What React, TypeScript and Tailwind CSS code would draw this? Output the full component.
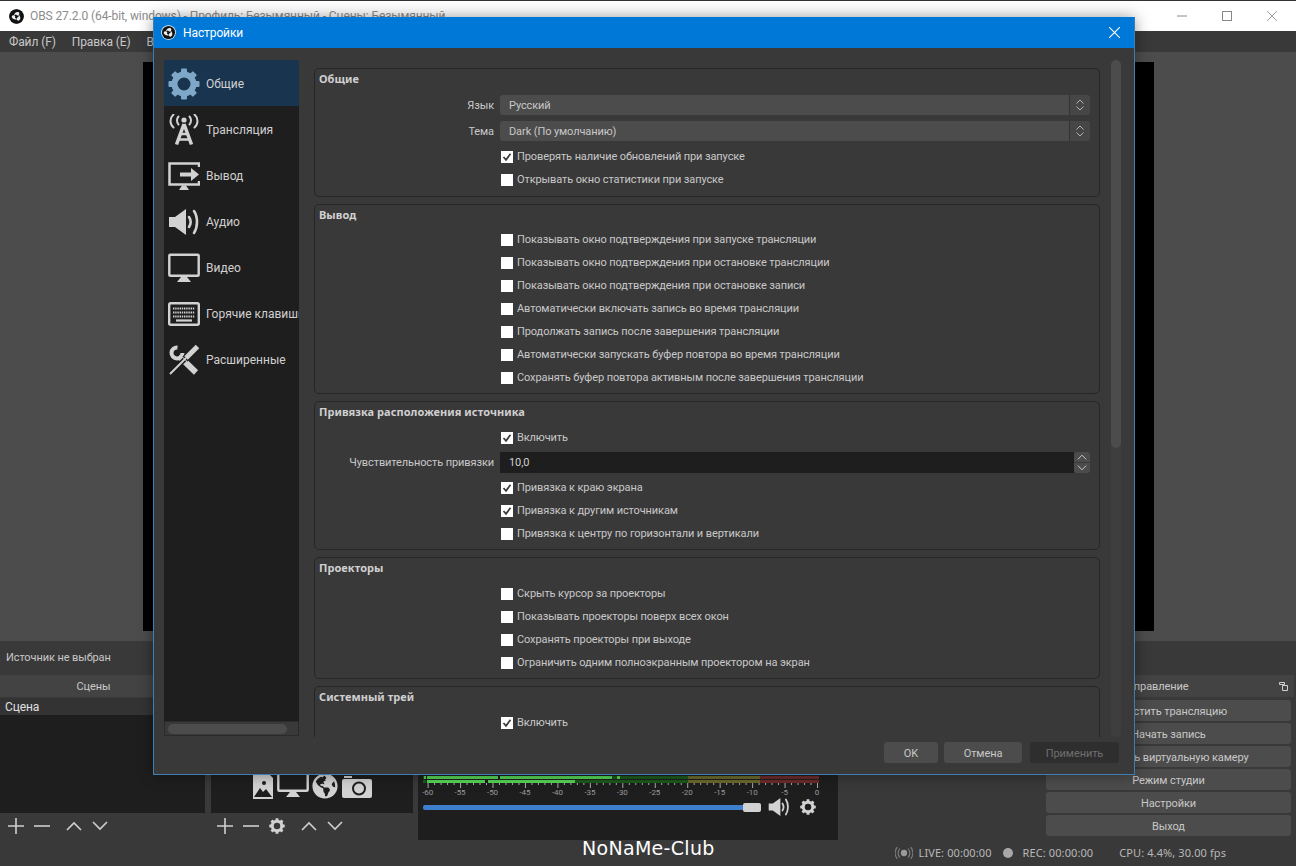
import { ReactNode } from 'react';
import { FaGlobeAmericas } from 'react-icons/fa';

const ObsLogo = ({ ring = false }: { ring?: boolean }) => (
  <svg viewBox="0 0 32 32" className="w-[15px] h-[15px] shrink-0">
    <circle cx="16" cy="16" r="15.5" fill={ring ? '#fff' : '#111'} />
    <circle cx="16" cy="16" r={ring ? 14 : 15} fill="#111" />
    {[0, 120, 240].map((a) => (
      <path
        key={a}
        d="M20 6.5a3.8 3.8 0 1 1-5.2 4.8c-1 1.4-2.4 2.200-4.300 2.200 .6-4.200 5-8.400 9.500-7z"
        fill="#eee"
        transform={`rotate(${a} 16 16)`}
      />
    ))}
  </svg>
);

const Gear = ({ className, color = '#d2d2d2' }: { className: string; color?: string }) => (
  <svg viewBox="0 0 32 32" className={className}>
    <circle cx="16" cy="16" r="9.5" fill="none" stroke={color} strokeWidth="6" />
    {[0, 45, 90, 135, 180, 225, 270, 315].map((a) => (
      <rect key={a} x="13" y="0.5" width="6" height="6" rx="1" fill={color} transform={`rotate(${a} 16 16)`} />
    ))}
  </svg>
);

const AntennaIcon = () => (
  <svg viewBox="0 0 32 32" className="w-[32px] h-[32px]">
    <circle cx="16" cy="6" r="2.6" fill="#d2d2d2" />
    <g fill="none" stroke="#d2d2d2" strokeWidth="2" strokeLinecap="round">
      <path d="M10.5 2.5c-2 2.2-2 5.8 0 8" />
      <path d="M21.5 2.5c2 2.2 2 5.8 0 8" />
      <path d="M5.5 0.5c-4 3.5-4 9.5 0 13" />
      <path d="M26.5 0.5c4 3.5 4 9.5 0 13" />
    </g>
    <path d="M16 10 L8.5 30.5 M16 10 L23.5 30.5" stroke="#d2d2d2" strokeWidth="3.5" fill="none" />
    <path d="M12 20h8M10.5 25.5h11" stroke="#d2d2d2" strokeWidth="2.5" />
  </svg>
);

const OutputIcon = () => (
  <svg viewBox="0 0 32 32" className="w-[32px] h-[32px]">
    <path d="M31 7V3.5H1.5V24.5H31V21" fill="none" stroke="#d2d2d2" strokeWidth="2.5" />
    <path d="M11 30l3-4.5h4l3 4.5z" fill="#d2d2d2" />
    <path d="M12 12.5h11V8l8 6.5-8 6.5v-4.5H12z" fill="#d2d2d2" />
  </svg>
);

const SpeakerIcon = ({ className }: { className: string }) => (
  <svg viewBox="0 0 32 32" className={className}>
    <path d="M1 11h6l11-8v26l-11-8H1z" fill="#d2d2d2" />
    <g fill="none" stroke="#d2d2d2" strokeWidth="2.6" strokeLinecap="round">
      <path d="M21 11c2 3 2 7 0 10" />
      <path d="M26 5c4 6 4 16 0 22" />
    </g>
  </svg>
);

const MonitorIcon = ({ className }: { className: string }) => (
  <svg viewBox="0 0 32 32" className={className}>
    <rect x="1.3" y="2.8" width="29.4" height="21" rx="1" fill="none" stroke="#d2d2d2" strokeWidth="2.4" />
    <path d="M9 30l4-5h6l4 5z" fill="#d2d2d2" />
  </svg>
);

const KeyboardIcon = () => (
  <svg viewBox="0 0 32 32" className="w-[32px] h-[32px]">
    <rect x="1.2" y="5.2" width="29.6" height="21.6" rx="1.5" fill="none" stroke="#d2d2d2" strokeWidth="2.4" />
    <g stroke="#d2d2d2" strokeWidth="2" strokeDasharray="1.4 0.8">
      <path d="M5 10.5h22" />
      <path d="M5 14.5h22" />
      <path d="M5 18.5h22" />
    </g>
    <path d="M8 22.5h16" stroke="#d2d2d2" strokeWidth="2.2" />
  </svg>
);

const ToolsIcon = () => (
  <svg viewBox="0 0 32 32" className="w-[32px] h-[32px]">
    <g fill="none" stroke="#d2d2d2">
      <path d="M9.5 3.5A5.5 5.5 0 1 0 14.5 9" strokeWidth="4" />
      <path d="M11 12l17 16.5" strokeWidth="6" />
    </g>
    <path d="M16.5 15.5L2 30" stroke="#1f1e1f" strokeWidth="5" />
    <path d="M29 3L17 15" stroke="#1f1e1f" strokeWidth="7" />
    <path d="M29.5 2.5L18 14" stroke="#d2d2d2" strokeWidth="5" />
    <path d="M18 14L2 30" stroke="#d2d2d2" strokeWidth="2" />
  </svg>
);

const Chevron = ({ up, className }: { up: boolean; className: string }) => (
  <svg viewBox="0 0 16 10" className={className}>
    <path d={up ? 'M1 9l7-7 7 7' : 'M1 1l7 7 7-7'} fill="none" stroke="#cfcfcf" strokeWidth="1.6" />
  </svg>
);

const ToolPlus = () => (
  <svg viewBox="0 0 16 16" className="w-[16px] h-[16px]">
    <path d="M8 0v16M0 8h16" stroke="#cfcfcf" strokeWidth="1.6" />
  </svg>
);

const ToolMinus = () => (
  <svg viewBox="0 0 16 16" className="w-[16px] h-[16px]">
    <path d="M0 8h16" stroke="#cfcfcf" strokeWidth="1.6" />
  </svg>
);

const navItems: { label: string; icon: ReactNode }[] = [
  { label: 'Общие', icon: <Gear className="w-[32px] h-[32px]" color="#7fa8c8" /> },
  { label: 'Трансляция', icon: <AntennaIcon /> },
  { label: 'Вывод', icon: <OutputIcon /> },
  { label: 'Аудио', icon: <SpeakerIcon className="w-[32px] h-[32px]" /> },
  { label: 'Видео', icon: <MonitorIcon className="w-[32px] h-[32px]" /> },
  { label: 'Горячие клавиши', icon: <KeyboardIcon /> },
  { label: 'Расширенные', icon: <ToolsIcon /> },
];

const Check = ({ label, checked = false }: { label: string; checked?: boolean }) => (
  <div className="flex items-center h-[23px] pl-[186px] text-[#c8c8c8]">
    <div className="w-[12px] h-[12px] bg-white flex items-center justify-center mr-[4px]">
      {checked && (
        <svg viewBox="0 0 12 12" className="w-[12px] h-[12px]">
          <path d="M2.5 6l2.5 2.8 4.5-6" fill="none" stroke="#3a393a" strokeWidth="1.7" />
        </svg>
      )}
    </div>
    <span className="pt-[2px]">{label}</span>
  </div>
);

const Combo = ({ label, value }: { label: string; value: string }) => (
  <div className="flex items-center h-[26px]">
    <div className="w-[179px] pt-[2px] text-right text-[#c8c8c8]">{label}</div>
    <div className="ml-[6px] w-[590px] h-[20px] bg-[#4c4c4c] rounded-[3px] flex items-center pl-[9px] text-[#c8c8c8]">
      <span className="flex-1 pt-[2px]">{value}</span>
      <div className="w-[21px] h-full border-l border-[#333] bg-[#464646] rounded-r-[3px] flex flex-col items-center justify-center gap-[2px]">
        <Chevron up className="w-[8px] h-[5px]" />
        <Chevron up={false} className="w-[8px] h-[5px]" />
      </div>
    </div>
  </div>
);

const Group = ({ title, className, children }: { title: string; className: string; children: ReactNode }) => (
  <div className={`shrink-0 rounded-[5px] border border-[#262626] ${className}`}>
    <div className="h-[21px] pl-[4px] flex items-center font-bold text-[#d0d0d0] font-['Noto_Sans',sans-serif] tracking-[0.05px]">{title}</div>
    <div className="mt-[2px]">{children}</div>
  </div>
);

const DockTitle = ({ title, className }: { title: string; className: string }) => (
  <div className={`h-[22px] pt-[2px] bg-[#444344] flex items-center justify-center text-[#c8c8c8] ${className}`}>{title}</div>
);

const Meter = () => {
  const x = (db: number) => 399 + db * 6.49;
  const ticks = Array.from({ length: 61 }, (_, i) => -i);
  const labels = ticks.filter((t) => t % 5 === 0);
  return (
    <svg width="420" height="22" className="block">
      <rect x="5" y="0" width="265" height="3" fill="#1c5a1c" />
      <rect x="5" y="4" width="265" height="3" fill="#1c5a1c" />
      <rect x="270" y="0" width="72" height="3" fill="#6a6a2c" />
      <rect x="270" y="4" width="72" height="3" fill="#6a6a2c" />
      <rect x="342" y="0" width="59" height="3" fill="#702a2a" />
      <rect x="342" y="4" width="59" height="3" fill="#702a2a" />
      <rect x="6" y="0" width="188" height="3" fill="#55d655" />
      <rect x="8" y="4" width="149" height="3" fill="#55d655" />
      <rect x="199" y="0" width="3" height="3" fill="#55d655" />
      <rect x="8" y="0" width="1" height="7" fill="#1f1e1f" />
      <rect x="80" y="0" width="2" height="4" fill="#1f1e1f" />
      <rect x="67" y="4" width="3" height="3" fill="#1f1e1f" />
      {ticks.map((t) => (
        <rect key={t} x={x(t)} y="7" width="1" height={t % 5 === 0 ? 5 : 2} fill="#aaa" />
      ))}
      {labels.map((t) => (
        <text key={t} x={x(t)} y="19" fontSize="8" fill="#999" textAnchor="middle">
          {t}
        </text>
      ))}
    </svg>
  );
};

const controlButtons = [
  'Запустить трансляцию',
  'Начать запись',
  'Запустить виртуальную камеру',
  'Режим студии',
  'Настройки',
  'Выход',
];

const App = () => {
  return (
    <div className="relative w-[1296px] h-[866px] overflow-hidden bg-[#3a393a] text-[11px] tracking-[-0.1px] font-['Roboto','Noto_Sans',sans-serif]">
      {/* main OBS window */}
      <div className="flex flex-col h-full">
        <div className="h-[31px] bg-white border-t border-[#333] flex items-center pl-[9px] text-[12px] text-[#8c8c8c]">
          <ObsLogo />
          <span className="ml-[6px] flex-1">OBS 27.2.0 (64-bit, windows) - Профиль: Безымянный - Сцены: Безымянный</span>
          <div className="flex items-center pr-[19px] gap-[35px]">
            <svg viewBox="0 0 10 10" className="w-[10px] h-[10px]"><path d="M0 5h10" stroke="#888" strokeWidth="1" /></svg>
            <svg viewBox="0 0 10 10" className="w-[10px] h-[10px]"><rect x="0.5" y="0.5" width="9" height="9" fill="none" stroke="#888" strokeWidth="1" /></svg>
            <svg viewBox="0 0 10 10" className="w-[10px] h-[10px]"><path d="M0 0l10 10M10 0L0 10" stroke="#888" strokeWidth="0.8" /></svg>
          </div>
        </div>
        <div className="h-[21px] flex items-center pl-[9px] gap-[16px] text-[12px] text-[#c8c8c8]">
          <span>Файл (F)</span>
          <span>Правка (E)</span>
          <span>Вид (V)</span>
        </div>
        <div className="h-[589px] bg-[#4c4c4c] flex items-center justify-center">
          <div className="w-[1011px] h-[569px] bg-black" />
        </div>
        <div className="h-[32px] pl-[6px] pt-[2px] flex items-center text-[#c8c8c8]">Источник не выбран</div>
        <div className="flex mt-[2px] h-[165px]">
          <div className="w-[205px] flex flex-col">
            <DockTitle title="Сцены" className="pr-[18px]" />
            <div className="flex-1 bg-[#1f1e1f] mt-[1px]">
              <div className="h-[17px] bg-[#343334] pl-[5px] flex items-center text-[12px] text-[#e0e0e0]">Сцена</div>
            </div>
            <div className="h-[27px] flex items-center pl-[8px] pb-[2px]">
              <ToolPlus />
              <div className="ml-[10px]"><ToolMinus /></div>
              <Chevron up className="ml-[16px] w-[16px] h-[10px]" />
              <Chevron up={false} className="ml-[10px] w-[16px] h-[10px]" />
            </div>
          </div>
          <div className="w-[202px] ml-[6px] flex flex-col">
            <DockTitle title="Источники" className="" />
            <div className="flex-1 bg-[#1f1e1f] mt-[1px] flex items-end pb-[14px] pl-[41px]">
              <svg viewBox="0 0 22 27" className="w-[22px] h-[27px]">
                <path d="M1 0h14l6 6v21H1z" fill="#d2d2d2" />
                <path d="M2 25l6-9 3 4 3-3 6 8z" fill="#1f1e1f" />
                <circle cx="12" cy="11" r="2" fill="#1f1e1f" />
              </svg>
              <MonitorIcon className="ml-[3px] w-[32px] h-[32px]" />
              <div className="ml-[3px] h-[26px]"><FaGlobeAmericas className="w-[26px] h-[26px] text-[#d2d2d2]" /></div>
              <svg viewBox="0 0 30 22" className="ml-[4px] w-[30px] h-[22px] mb-[1px]">
                <rect x="0" y="3" width="30" height="19" rx="2" fill="#d2d2d2" />
                <rect x="2" y="0" width="8" height="2" fill="#d2d2d2" />
                <circle cx="17" cy="12.5" r="6" fill="#d2d2d2" stroke="#1f1e1f" strokeWidth="2" />
              </svg>
            </div>
            <div className="h-[27px] flex items-center pl-[6px] pb-[2px]">
              <ToolPlus />
              <div className="ml-[10px]"><ToolMinus /></div>
              <Gear className="ml-[10px] w-[16px] h-[16px]" />
              <Chevron up className="ml-[16px] w-[16px] h-[10px]" />
              <Chevron up={false} className="ml-[10px] w-[16px] h-[10px]" />
            </div>
          </div>
          <div className="w-[420px] ml-[5px] h-[165px] bg-[#1f1e1f] flex">
            <div className="flex-1 flex flex-col justify-end pb-[24px]">
              <Meter />
              <div className="h-[18px] flex items-center pl-[5px]">
                <div className="w-[320px] h-[5px] bg-[#3d7fcc] rounded-l-[2px]" />
                <div className="w-[18px] h-[9px] bg-[#d2d2d2] rounded-[2px]" />
                <SpeakerIcon className="ml-[7px] w-[22px] h-[22px]" />
                <Gear className="ml-[10px] w-[16px] h-[16px]" />
              </div>
            </div>
            <div className="w-[11px] mr-[2px] bg-[#3a393a]">
              <div className="w-full h-[160px] bg-[#4c4c4c] rounded-[5px]" />
            </div>
          </div>
          <div className="ml-auto mr-[2px] w-[248px] flex flex-col">
            <div className="h-[22px] pt-[2px] bg-[#444344] flex items-center justify-center relative text-[#c8c8c8] pr-[24px]">
              Управление
              <svg viewBox="0 0 9 9" className="absolute right-[6px] top-[7px] w-[9px] h-[9px]">
                <path d="M0.5 0.5h5v2h-5zM3.5 3.5h5v5h-5z" fill="none" stroke="#cfcfcf" strokeWidth="1" />
              </svg>
            </div>
            <div className="flex flex-col gap-[2px] mt-[3px] pr-[3px]">
              {controlButtons.map((b) => (
                <div key={b} className="h-[21px] bg-[#4c4c4c] rounded-[3px] flex items-center justify-center pt-[3px] text-[#c8c8c8] whitespace-nowrap">
                  {b}
                </div>
              ))}
            </div>
          </div>
        </div>
        <div className="flex-1 flex items-center justify-end pr-[70px] text-[#b8b8b8] tracking-[0.1px] font-['Noto_Sans',sans-serif]">
          <svg viewBox="0 0 20 14" className="w-[18px] h-[14px]">
            <circle cx="10" cy="7" r="3.5" fill="#9a9a9a" />
            <g fill="none" stroke="#7a7a7a" strokeWidth="1.3">
              <path d="M5.5 2c-2.5 3-2.5 7 0 10M14.5 2c2.5 3 2.5 7 0 10" />
              <path d="M2.5 0.5c-3 4-3 9 0 13M17.5 0.5c3 4 3 9 0 13" />
            </g>
          </svg>
          <span className="ml-[6px]">LIVE: 00:00:00</span>
          <div className="ml-[11px] w-[10px] h-[10px] rounded-full bg-[#a8a8a8]" />
          <span className="ml-[10px]">REC: 00:00:00</span>
          <span className="ml-[26px]">CPU: 4.4%, 30.00 fps</span>
        </div>
      </div>

      {/* watermark */}
      <div className="absolute left-[582px] top-[835px] text-[19px] leading-[26px] text-white tracking-[0.3px] font-['DejaVu_Sans',sans-serif]">
        NoNaMe-Club
      </div>

      {/* settings dialog */}
      <div className="absolute left-[153px] top-[17px] w-[982px] h-[758px] bg-[#3a393a] border border-[#3d7fb5] border-t-0 shadow-[0_0_14px_rgba(0,0,0,0.4)] flex flex-col">
        <div className="h-[31px] bg-[#0078d7] flex items-center pl-[7px] pr-[14px] text-[12px] text-white shrink-0">
          <ObsLogo ring />
          <span className="ml-[7px] pt-[1px] flex-1">Настройки</span>
          <svg viewBox="0 0 10 10" className="w-[11px] h-[11px]"><path d="M0 0l10 10M10 0L0 10" stroke="#fff" strokeWidth="1" /></svg>
        </div>
        <div className="h-[689px] flex pt-[12px] pl-[10px] shrink-0">
          <div className="w-[135px] h-[676px] bg-[#1f1e1f] flex flex-col overflow-hidden text-[12px] tracking-normal text-[#d0d0d0]">
            <div className="flex-1">
              {navItems.map((n, i) => (
                <div key={n.label} className={`h-[46px] flex items-center pl-[4px] pt-[2px] whitespace-nowrap ${i === 0 ? 'bg-[#19344e]' : ''}`}>
                  <div className="w-[32px] shrink-0">{n.icon}</div>
                  <span className="ml-[6px]">{n.label}</span>
                </div>
              ))}
            </div>
            <div className="h-[15px] bg-[#3a393a] border border-[#2a2a2a] flex items-center pl-[3px]">
              <div className="w-[119px] h-[10px] bg-[#4c4c4c] rounded-[5px]" />
            </div>
          </div>
          <div className="ml-[15px] w-[786px] h-[677px] overflow-hidden flex flex-col gap-[7px] pt-[8px]">
            <Group title="Общие" className="h-[129px]">
              <Combo label="Язык" value="Русский" />
              <Combo label="Тема" value="Dark (По умолчанию)" />
              <div className="h-px" />
              <Check label="Проверять наличие обновлений при запуске" checked />
              <Check label="Открывать окно статистики при запуске" />
            </Group>
            <Group title="Вывод" className="h-[190px]">
              <Check label="Показывать окно подтверждения при запуске трансляции" />
              <Check label="Показывать окно подтверждения при остановке трансляции" />
              <Check label="Показывать окно подтверждения при остановке записи" />
              <Check label="Автоматически включать запись во время трансляции" />
              <Check label="Продолжать запись после завершения трансляции" />
              <Check label="Автоматически запускать буфер повтора во время трансляции" />
              <Check label="Сохранять буфер повтора активным после завершения трансляции" />
            </Group>
            <Group title="Привязка расположения источника" className="h-[149px]">
              <div className="h-px" />
              <Check label="Включить" checked />
              <div className="flex items-center h-[27px]">
                <div className="w-[179px] pt-[2px] text-right text-[#c8c8c8]">Чувствительность привязки</div>
                <div className="ml-[6px] w-[574px] h-[21px] bg-[#1f1e1f] flex items-center pl-[9px] pt-[2px] text-[#d0d0d0]">10,0</div>
                <div className="w-[16px] h-[21px] flex flex-col gap-[1px]">
                  <div className="h-[10px] bg-[#4c4c4c] rounded-t-[3px] flex items-center justify-center"><Chevron up className="w-[10px] h-[6px]" /></div>
                  <div className="h-[10px] bg-[#4c4c4c] rounded-b-[3px] flex items-center justify-center"><Chevron up={false} className="w-[10px] h-[6px]" /></div>
                </div>
              </div>
              <Check label="Привязка к краю экрана" checked />
              <Check label="Привязка к другим источникам" checked />
              <Check label="Привязка к центру по горизонтали и вертикали" />
            </Group>
            <Group title="Проекторы" className="h-[122px]">
              <div className="h-px" />
              <Check label="Скрыть курсор за проекторы" />
              <Check label="Показывать проекторы поверх всех окон" />
              <Check label="Сохранять проекторы при выходе" />
              <Check label="Ограничить одним полноэкранным проектором на экран" />
            </Group>
            <Group title="Системный трей" className="h-[80px]">
              <div className="h-px" />
              <Check label="Включить" checked />
            </Group>
          </div>
          <div className="ml-[11px] w-[10px] h-[677px] bg-[#3f3e3f] rounded-[5px]">
            <div className="h-[388px] bg-[#4c4c4c] rounded-[5px]" />
          </div>
        </div>
        <div className="flex-1 flex items-center justify-end pr-[15px] pb-[6px] text-[#c8c8c8]">
          <div className="w-[54px] h-[21px] pt-[3px] bg-[#4c4c4c] rounded-[3px] flex items-center justify-center">OK</div>
          <div className="ml-[6px] w-[78px] h-[21px] pt-[3px] bg-[#4c4c4c] rounded-[3px] flex items-center justify-center">Отмена</div>
          <div className="ml-[8px] w-[89px] h-[21px] pt-[3px] bg-[#2f2e2f] rounded-[3px] flex items-center justify-center text-[#6e6e6e]">Применить</div>
        </div>
      </div>
    </div>
  );
};

export default App;
